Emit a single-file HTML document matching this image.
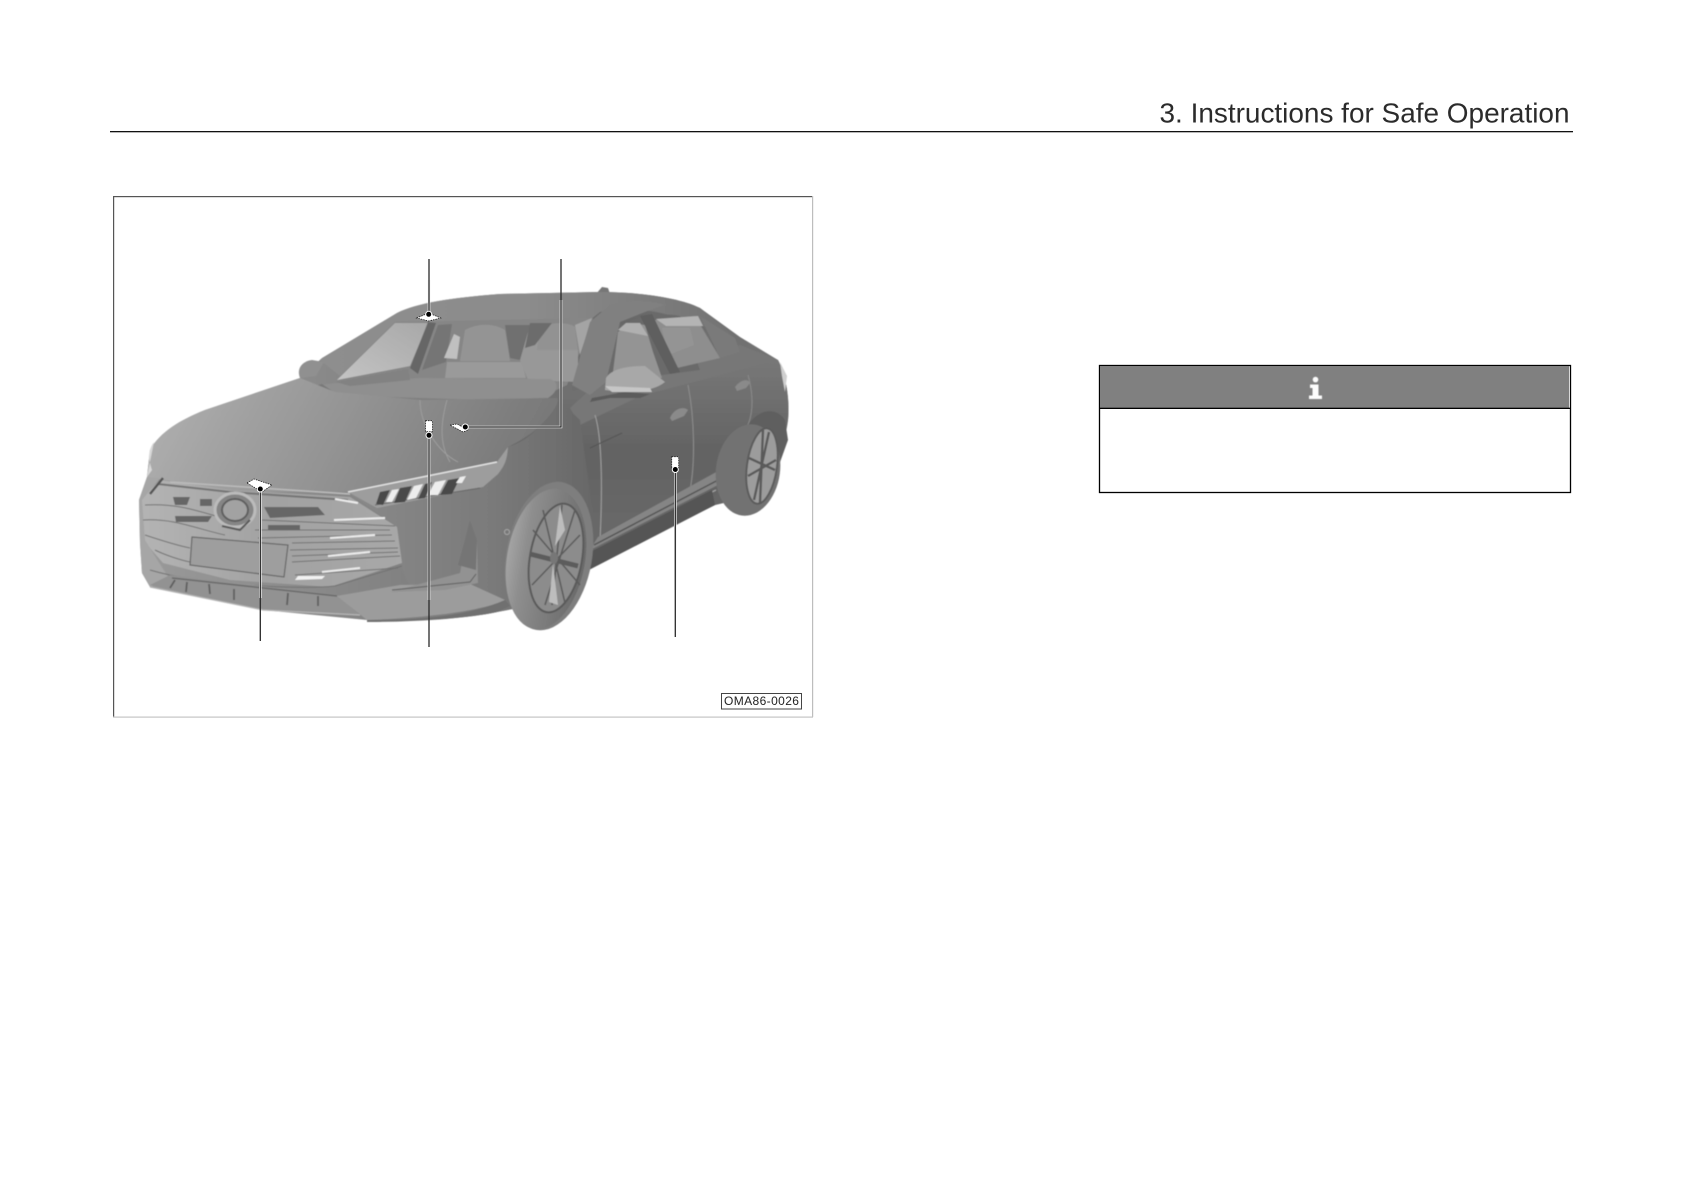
<!DOCTYPE html>
<html><head><meta charset="utf-8"><title>3. Instructions for Safe Operation</title>
<style>html,body{margin:0;padding:0;background:#fff}svg{display:block;position:absolute;left:0;top:0}</style></head>
<body>
<svg width="1684" height="1191" viewBox="0 0 1684 1191" xmlns="http://www.w3.org/2000/svg">
<defs>
<linearGradient id="hood" x1="0" y1="0" x2="1" y2="0.15"><stop offset="0" stop-color="#b2b2b2"/><stop offset=".3" stop-color="#a0a0a0"/><stop offset=".7" stop-color="#8a8a8a"/><stop offset="1" stop-color="#797979"/></linearGradient>
<linearGradient id="body" x1="0" y1="0" x2="1" y2="0"><stop offset="0" stop-color="#9a9a9a"/><stop offset=".5" stop-color="#7c7c7c"/><stop offset=".75" stop-color="#686868"/><stop offset="1" stop-color="#757575"/></linearGradient>
<linearGradient id="door" x1="0" y1="0" x2="0" y2="1"><stop offset="0" stop-color="#787878"/><stop offset=".45" stop-color="#636363"/><stop offset="1" stop-color="#6a6a6a"/></linearGradient>
<linearGradient id="fender" x1="0" y1="0" x2="1" y2="0"><stop offset="0" stop-color="#8a8a8a"/><stop offset=".6" stop-color="#7a7a7a"/><stop offset="1" stop-color="#686868"/></linearGradient>
<linearGradient id="roof" x1="0" y1="0" x2="1" y2="0"><stop offset="0" stop-color="#8e8e8e"/><stop offset=".5" stop-color="#8c8c8c"/><stop offset="1" stop-color="#727272"/></linearGradient>
<linearGradient id="glass" x1="0" y1="1" x2="1" y2="0"><stop offset="0" stop-color="#c4c4c4"/><stop offset="1" stop-color="#a8a8a8"/></linearGradient>
<linearGradient id="grille" x1="0" y1="0" x2="1" y2="0"><stop offset="0" stop-color="#b4b4b4"/><stop offset=".5" stop-color="#a2a2a2"/><stop offset="1" stop-color="#a8a8a8"/></linearGradient>
<linearGradient id="tire" x1="0" y1="0" x2="1" y2="0"><stop offset="0" stop-color="#a4a4a4"/><stop offset=".22" stop-color="#8e8e8e"/><stop offset="1" stop-color="#6a6a6a"/></linearGradient>
<filter id="soft" x="-5%" y="-5%" width="110%" height="110%"><feGaussianBlur stdDeviation=".6"/></filter>
<filter id="soft1" x="-5%" y="-5%" width="110%" height="110%"><feGaussianBlur stdDeviation=".5"/></filter>
</defs>
<rect width="1684" height="1191" fill="#fff"/>

<!-- header -->
<text x="1159.5" y="122.7" font-family="Liberation Sans, sans-serif" font-size="28" fill="#2b2b2b" textLength="410" lengthAdjust="spacingAndGlyphs">3. Instructions for Safe Operation</text>
<rect x="110" y="131" width="1463" height="1.3" fill="#111"/>

<!-- figure frame -->
<rect x="113" y="196" width="700" height="1.2" fill="#555"/>
<rect x="113" y="196" width="1.2" height="521" fill="#555"/>
<rect x="812" y="196" width="1.2" height="521" fill="#bdbdbd"/>
<rect x="113" y="716.5" width="700" height="1.2" fill="#c4c4c4"/>

<!-- car -->
<g filter="url(#soft)">
<!-- base -->
<path d="M150 450C160 432 180 420 205 410L300 378L322 358L397 313C417 303 450 298 500 294L600 292C640 292 680 298 700 308L740 337L778 360C786 375 790 400 788 420C786 440 778 452 777 470L770 492L715 505L590 565L560 600L497 612C470 618 420 622 367 620L263 610L150 587L142 573L140 543L139 500L147 477Z" fill="url(#body)"/>
<!-- left mirror -->
<path d="M300 378C296 368 303 361 312 360L324 362L316 376Z" fill="#909090"/>
<!-- antenna -->
<path d="M596 294L602 287L608 288L610 294Z" fill="#777"/>
<!-- roof band -->
<path d="M320 360L397 313C417 303 450 298 500 294L600 292C640 292 680 298 700 308L735 336L690 322C660 310 630 306 600 312L590 320L395 322L340 376Z" fill="url(#roof)"/>
<!-- windshield interior -->
<path d="M337 380L395 322L593 318L567 385L540 398L340 385Z" fill="#868686"/>
<path d="M337 380L395 323L428 323L410 366Z" fill="url(#glass)"/>
<path d="M410 368L428 322L436 323L418 374Z" fill="#666"/>
<path d="M422 370L438 325L452 324L446 362Z" fill="#757575"/>
<path d="M444 358L454 334L460 337L457 359Z" fill="#c0c0c0"/>
<path d="M460 361L465 330C480 322 495 324 505 330L510 361Z" fill="#949494"/>
<path d="M447 362H522L526 378H445Z" fill="#9a9a9a"/>
<path d="M510 340L540 328L548 330L572 326L578 350L578 382L528 380L520 360Z" fill="#989898"/>
<path d="M540 327C550 322 570 322 575 327L578 350L537 350Z" fill="#929292"/>
<path d="M505 325H530L520 360L510 358Z" fill="#707070"/>
<path d="M530 323H552L535 345L525 348Z" fill="#6c6c6c"/>
<path d="M575 325L592 318L580 355Z" fill="#a4a4a4"/>
<!-- dash -->
<path d="M300 388L335 383L420 378L550 379C560 382 558 392 548 398L480 400L360 396Z" fill="#8f8f8f"/>
<path d="M336 382L408 369L410 380L350 386Z" fill="#828282"/>
<path d="M300 390L322 384L338 395Z" fill="#787878"/>
<!-- side body -->
<path d="M557 398L590 385L700 358L778 360C786 375 790 400 788 420L777 470L770 492L715 505L590 565L580 520L560 470L508 447C540 432 560 410 557 398Z" fill="url(#door)"/>
<path d="M596 384L740 345L778 360L640 396L580 425L570 408Z" fill="#777"/>
<!-- front fender -->
<path d="M348 492L497 462L508 447C530 440 550 420 557 398L580 420L592 510L590 565L560 600L497 612C470 618 440 618 420 610L400 563L397 527Z" fill="url(#fender)"/>
<!-- hood -->
<path d="M150 450C160 432 180 420 205 410L300 378L335 392L420 400L557 398C562 404 540 432 508 447L497 462L348 492L235 492L165 480L147 477Z" fill="url(#hood)"/>
<path d="M152 470C148 458 148 450 154 442L147 477Z" fill="#d8d8d8"/>
<!-- side windows -->
<path d="M606 380L615 328C640 315 660 312 680 316L700 370L640 378L620 396Z" fill="#6a6a6a"/>
<path d="M612 380L618 332L630 323L645 325L653 352L662 378Z" fill="#949494"/>
<path d="M618 330L626 323L640 323L648 336L628 332Z" fill="#b0b0b0"/>
<path d="M655 320L695 316L720 358L677 368Z" fill="#8e8e8e"/>
<path d="M656 319L698 316L703 326L666 326Z" fill="#b4b4b4"/>
<path d="M662 328L690 328L694 345L668 355Z" fill="#949494"/>
<path d="M640 316L652 314L680 372L670 374Z" fill="#5e5e5e"/>
<path d="M720 358L700 316L735 338L740 352Z" fill="#7a7a7a"/>
<path d="M780 362L787 376L785 392L782 376Z" fill="#cfcfcf"/>
<!-- a-pillar right -->
<path d="M590 322L610 305C630 300 650 300 665 305L650 310L620 322L606 382L590 395L572 385Z" fill="#808080"/>
<!-- right mirror -->
<path d="M606 378C612 368 630 366 645 366L665 382C655 390 640 392 620 392L605 390Z" fill="#a8a8a8"/>
<path d="M592 398L625 392L650 394L640 398L610 398L590 402Z" fill="#5c5c5c"/>
<path d="M605 386L650 388L652 392L612 392Z" fill="#c6c6c6"/>
<!-- door lines and handles -->
<path d="M595 415C603 440 602 500 600 540" fill="none" stroke="#a0a0a0" stroke-width="1"/>
<path d="M688 385C695 420 695 465 690 490" fill="none" stroke="#8d8d8d" stroke-width="1"/>
<path d="M748 375C755 400 752 420 745 430" fill="none" stroke="#8a8a8a" stroke-width="1"/>
<path d="M670 418C674 408 684 406 688 410L684 416L672 421Z" fill="#8a8a8a"/>
<path d="M735 387C740 380 748 378 750 383L746 388L737 391Z" fill="#8a8a8a"/>
<path d="M590 448L622 433" stroke="#555" stroke-width="1" fill="none"/>
<path d="M420 400C420 425 438 452 458 462M447 400C440 425 440 445 450 462" fill="none" stroke="#a0a0a0" stroke-width=".8"/>
<!-- rocker -->
<path d="M598 537L720 470L718 485L590 550Z" fill="#858585"/>
<path d="M594 545L722 478" stroke="#555" stroke-width="1.5" fill="none"/>
<path d="M598 550L716 490" stroke="#a8a8a8" stroke-width="1" fill="none"/>
<path d="M585 572L715 505L712 490L590 552Z" fill="#555"/>
<!-- rear wheel -->
<path d="M745 430C755 410 775 405 785 420L788 440L770 490L735 495Z" fill="#5f5f5f"/>
<ellipse cx="748" cy="470" rx="32" ry="46" transform="rotate(8 748 470)" fill="#727272"/>
<ellipse cx="762" cy="466" rx="15" ry="38" transform="rotate(8 762 466)" fill="#9c9c9c" stroke="#5c5c5c" stroke-width="2"/>
<path d="M749 458L775 470M763 430L760 503M748 476L776 460M769 432L754 500" stroke="#5a5a5a" stroke-width="2.4" fill="none"/>
<!-- front wheel arch + tire -->
<ellipse cx="549" cy="556" rx="43" ry="75" transform="rotate(10 549 556)" fill="#7e7e7e"/>
<ellipse cx="546" cy="559" rx="39" ry="71" transform="rotate(10 546 559)" fill="url(#tire)"/>
<ellipse cx="556" cy="558" rx="26" ry="55" transform="rotate(10 556 558)" fill="#8c8c8c" stroke="#5a5a5a" stroke-width="2"/>
<g stroke="#5c5c5c" fill="none">
<path d="M530 554L578 566" stroke-width="5"/>
<path d="M562 505L552 605M575 510L545 605M543 510L565 603M580 535L532 585M533 530L580 585" stroke-width="1.6"/>
</g>
<path d="M560 506L565 530L555 546ZM553 564L558 605L549 602Z" fill="#bdbdbd"/>
<ellipse cx="554" cy="558" rx="4" ry="6" fill="#777"/>
<!-- grille -->
<path d="M140 500L160 480L230 490L350 497L397 527L402 563L330 587L230 580L163 563L143 540Z" fill="url(#grille)"/>
<path d="M147 477L139 500L140 543L142 573L150 587L170 580L145 540L142 500L160 478Z" fill="#a6a6a6"/>
<path d="M158 484L230 492L348 500" stroke="#747474" stroke-width="2" fill="none"/>
<path d="M163 478L150 494" stroke="#555" stroke-width="2.5" fill="none"/>
<path d="M170 482L350 494" stroke="#bbb" stroke-width="1.5" fill="none"/>
<g fill="none" stroke="#727272" stroke-width="1">
<path d="M145 505C180 503 200 512 230 520"/><path d="M143 520C175 518 200 530 225 535"/><path d="M145 535C160 540 175 545 190 548"/>
<path d="M155 550C165 555 180 560 190 562"/>
<path d="M255 530H390"/><path d="M262 520L395 526"/><path d="M258 538L392 535"/><path d="M290 550L398 548"/><path d="M292 562L400 556"/><path d="M295 575L398 568"/><path d="M292 543L395 541"/><path d="M292 556L398 552"/>
<path d="M150 570C200 585 300 590 335 586L402 566"/>
</g>
<g fill="#666"><path d="M173 497H190L187 505H175Z"/><path d="M200 499H212V506H200Z"/><path d="M175 516H212L208 522H176Z"/><path d="M264 507H318L325 515L270 518Z"/><path d="M268 525H300V530H268Z"/></g>
<g stroke="#ececec" stroke-width="2" fill="none"><path d="M335 499L358 503"/><path d="M334 520L385 518"/><path d="M330 538L375 535"/><path d="M328 556L370 552"/><path d="M322 572L360 568"/></g>
<path d="M298 576L325 576L322 579L295 580Z" fill="#f2f2f2"/>
<!-- logo -->
<ellipse cx="235" cy="510" rx="20" ry="17" fill="#858585" stroke="#bbb" stroke-width="3"/>
<ellipse cx="235" cy="510" rx="13" ry="11" fill="#a2a2a2" stroke="#5f5f5f" stroke-width="2"/>
<path d="M222 526L240 530L250 520" stroke="#5a5a5a" stroke-width="2" fill="none"/>
<!-- plate -->
<path d="M192 537L288 545L284 577L190 565Z" fill="#9e9e9e" stroke="#666" stroke-width="1.2"/>
<!-- lower intake -->
<path d="M150 585L170 575L337 595L360 615L263 610Z" fill="#929292"/>
<path d="M172 578L337 596" stroke="#6a6a6a" stroke-width="1.5" fill="none"/>
<path d="M150 587L263 610L360 615" stroke="#b6b6b6" stroke-width="1.2" fill="none"/>
<g stroke="#5e5e5e" stroke-width="1.8" fill="none"><path d="M187 582L186 592M209 584L210 594M234 589L234 600M288 593L287 605M318 596L318 606M175 580L170 588"/></g>
<!-- bumper lip -->
<path d="M337 596L400 585L470 584L505 600C480 612 420 618 367 620Z" fill="#9c9c9c"/>
<path d="M367 620C420 620 470 616 505 600L510 606L497 612C470 618 420 622 367 622Z" fill="#707070"/>
<!-- fog slot -->
<path d="M470 520L477 540L478 583L445 590L390 592L460 573Z" fill="#929292"/>
<path d="M470 520L477 540L476 570L458 565L465 540Z" fill="#757575"/>
<path d="M392 590L470 582L476 574" stroke="#5e5e5e" stroke-width="1" fill="none"/>
<!-- sensor -->
<circle cx="507" cy="532" r="2.5" fill="none" stroke="#a8a8a8" stroke-width="1"/>
<!-- headlight -->
<path d="M348 492L497 462L508 447C507 460 505 465 498 474L483 487L377 508Z" fill="#9d9d9d"/>
<path d="M348 492L497 462" stroke="#e2e2e2" stroke-width="1.5" fill="none"/>
<path d="M375 505L480 488" stroke="#666" stroke-width="1" fill="none"/>
<g fill="#4a4a4a"><path d="M380 492L390 490L383 505L376 504Z"/><path d="M400 488L412 486L405 502L394 503Z"/><path d="M425 484L432 482L425 498L418 499Z"/><path d="M448 480L460 478L452 494L440 495Z"/></g>
<g fill="#ededed"><path d="M392 490L399 489L392 502H386Z"/><path d="M414 486L423 484L416 498L407 500Z"/><path d="M435 482L446 480L438 495H428Z"/><path d="M460 477L466 476L462 483H456Z"/></g>
</g>

<!-- callouts -->
<g fill="none" stroke="#f2f2f2" stroke-width="2.6">
<path d="M429 280V314M561 300V427H466M429 436V600M260.3 490V598M675.3 470V590"/>
</g>
<g fill="none" stroke="#2a2a2a" stroke-width="1.3">
<path d="M429 259V314"/>
<path d="M561 259V427H465"/>
<path d="M429 435V647"/>
<path d="M260.3 489V641"/>
<path d="M675.3 469V637"/>
</g>
<g fill="#fff" stroke="#222" stroke-width=".8" stroke-dasharray="1.5 1">
<path d="M416.7 318L428.7 313L440.7 318L428.7 321Z"/>
<path d="M450 425L457 424L468 430L463 432Z"/>
<rect x="425.5" y="420.7" width="7" height="11"/>
<path d="M247 483L254 479L272 485L262 492Z"/>
<rect x="671.7" y="456.7" width="7" height="11"/>
</g>
<g fill="#000" stroke="#fff" stroke-width="1"><circle cx="428.7" cy="314.3" r="3"/><circle cx="465.3" cy="427" r="3"/><circle cx="429" cy="435.3" r="3"/><circle cx="260.3" cy="489" r="3"/><circle cx="675.3" cy="469.5" r="3"/></g>

<!-- figure code -->
<rect x="721.5" y="693.5" width="80" height="15.5" fill="#fff" stroke="#444" stroke-width="1"/>
<text x="724" y="705" font-family="Liberation Sans, sans-serif" font-size="12" letter-spacing=".4" fill="#222">OMA86-0026</text>

<!-- note box -->
<rect x="1099.5" y="365.5" width="471" height="127" fill="#fff" stroke="#000" stroke-width="1.3"/>
<rect x="1100" y="366" width="469" height="42" fill="#808080"/>
<rect x="1099.5" y="407.7" width="471" height="1.3" fill="#000"/>
<g fill="#fff" filter="url(#soft1)" opacity=".98">
<circle cx="1315.5" cy="379.6" r="2.8"/>
<path d="M1310 384.5H1318.5V395.5H1322V399H1309V395.5H1312.5V388H1310Z"/>
</g>
</svg>
</body></html>
